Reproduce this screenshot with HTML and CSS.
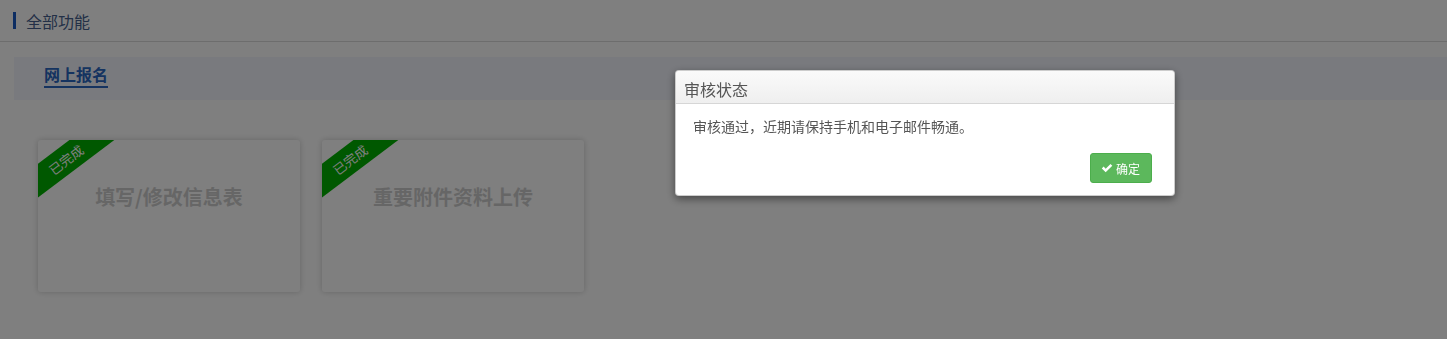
FILE: index.html
```html
<!DOCTYPE html>
<html lang="zh-CN">
<head>
    <meta charset="UTF-8">
    <meta name="viewport" content="width=device-width, initial-scale=1.0">
    <title>全部功能</title>
    <link rel="stylesheet" href="styles.css">
</head>
<body>
    <div class="top-bar">
        <span class="top-mark"></span>
        <span class="top-title">全部功能</span>
    </div>

    <div class="main">
        <div class="section-band">
            <span class="section-title">网上报名</span>
        </div>

        <div class="card-list">
            <div class="card">
                <div class="ribbon">已完成</div>
                <div class="card-title">填写/修改信息表</div>
            </div>
            <div class="card">
                <div class="ribbon">已完成</div>
                <div class="card-title">重要附件资料上传</div>
            </div>
        </div>
    </div>

    <div class="backdrop"></div>

    <div class="dialog">
        <div class="dialog-header">审核状态</div>
        <div class="dialog-body">审核通过，近期请保持手机和电子邮件畅通。</div>
        <div class="dialog-footer">
            <button class="btn-ok">
                <svg class="btn-icon" width="12" height="12" viewBox="0 0 12 12">
                    <path d="M0.8 6.4 L2.6 4.6 L4.7 6.7 L9.5 1.9 L11.3 3.7 L4.7 10.3 Z" fill="#fff"/>
                </svg>
                确定
            </button>
        </div>
    </div>
</body>
</html>
```

FILE: styles.css
```css
body {
    margin: 0;
    background: #fff;
    font-family: "Noto Sans CJK SC", "Liberation Sans", sans-serif;
}
.top-bar {
    display: flex;
    align-items: center;
    height: 41px;
    padding-left: 13px;
    border-bottom: 1px solid #dadada;
}
.top-mark {
    width: 3px;
    height: 17px;
    background: #1a5bc4;
    margin-right: 10px;
}
.top-title {
    font-size: 16px;
    color: #46618e;
}
.main {
    padding: 15px 0 40px 14px;
}
.section-band {
    display: flex;
    align-items: flex-start;
    height: 43px;
    box-sizing: border-box;
    padding: 6px 0 0 30px;
    background: #f2f5fd;
}
.section-title {
    font-size: 16px;
    font-weight: bold;
    line-height: 23px;
    color: #2a66c0;
    border-bottom: 2px solid #2a66c0;
}
.card-list {
    display: flex;
    gap: 22px;
    margin-top: 40px;
    padding-left: 24px;
}
.card {
    position: relative;
    overflow: hidden;
    width: 262px;
    height: 152px;
    background: #fff;
    border-radius: 3px;
    box-shadow: 0 0 6px rgba(0, 0, 0, 0.2);
}
.ribbon {
    position: absolute;
    left: -32px;
    top: 6px;
    width: 120px;
    height: 27px;
    line-height: 27px;
    text-align: center;
    font-size: 13px;
    color: #fff;
    background: #00b000;
    transform: rotate(-37deg);
}
.card-title {
    margin-top: 43px;
    text-align: center;
    font-size: 20px;
    font-weight: bold;
    line-height: 28px;
    color: #cdcdcd;
}
.backdrop {
    position: fixed;
    inset: 0;
    background: rgba(0, 0, 0, 0.5);
}
.dialog {
    position: fixed;
    left: 675px;
    top: 70px;
    width: 500px;
    box-sizing: border-box;
    background: #fff;
    border: 1px solid rgba(0, 0, 0, 0.2);
    border-radius: 4px;
    box-shadow: 0 3px 8px rgba(0, 0, 0, 0.45);
}
.dialog-header {
    height: 33px;
    box-sizing: border-box;
    padding: 7px 8px 0;
    font-size: 16px;
    line-height: 22px;
    color: #555;
    background: linear-gradient(#fafafa, #efefef);
    border-bottom: 1px solid #d6d6d6;
    border-radius: 4px 4px 0 0;
}
.dialog-body {
    padding: 12px 17px 0;
    font-size: 14px;
    line-height: 20px;
    color: #555;
}
.dialog-footer {
    display: flex;
    justify-content: flex-end;
    padding: 17px 22px 12px;
}
.btn-ok {
    display: flex;
    align-items: center;
    gap: 3px;
    height: 30px;
    padding: 0 11px 0 10px;
    border: 1px solid #4cae4c;
    border-radius: 3px;
    background: #5cb85c;
    color: #fff;
    font-family: inherit;
    font-size: 12px;
}
.btn-icon {
    display: block;
}
```
